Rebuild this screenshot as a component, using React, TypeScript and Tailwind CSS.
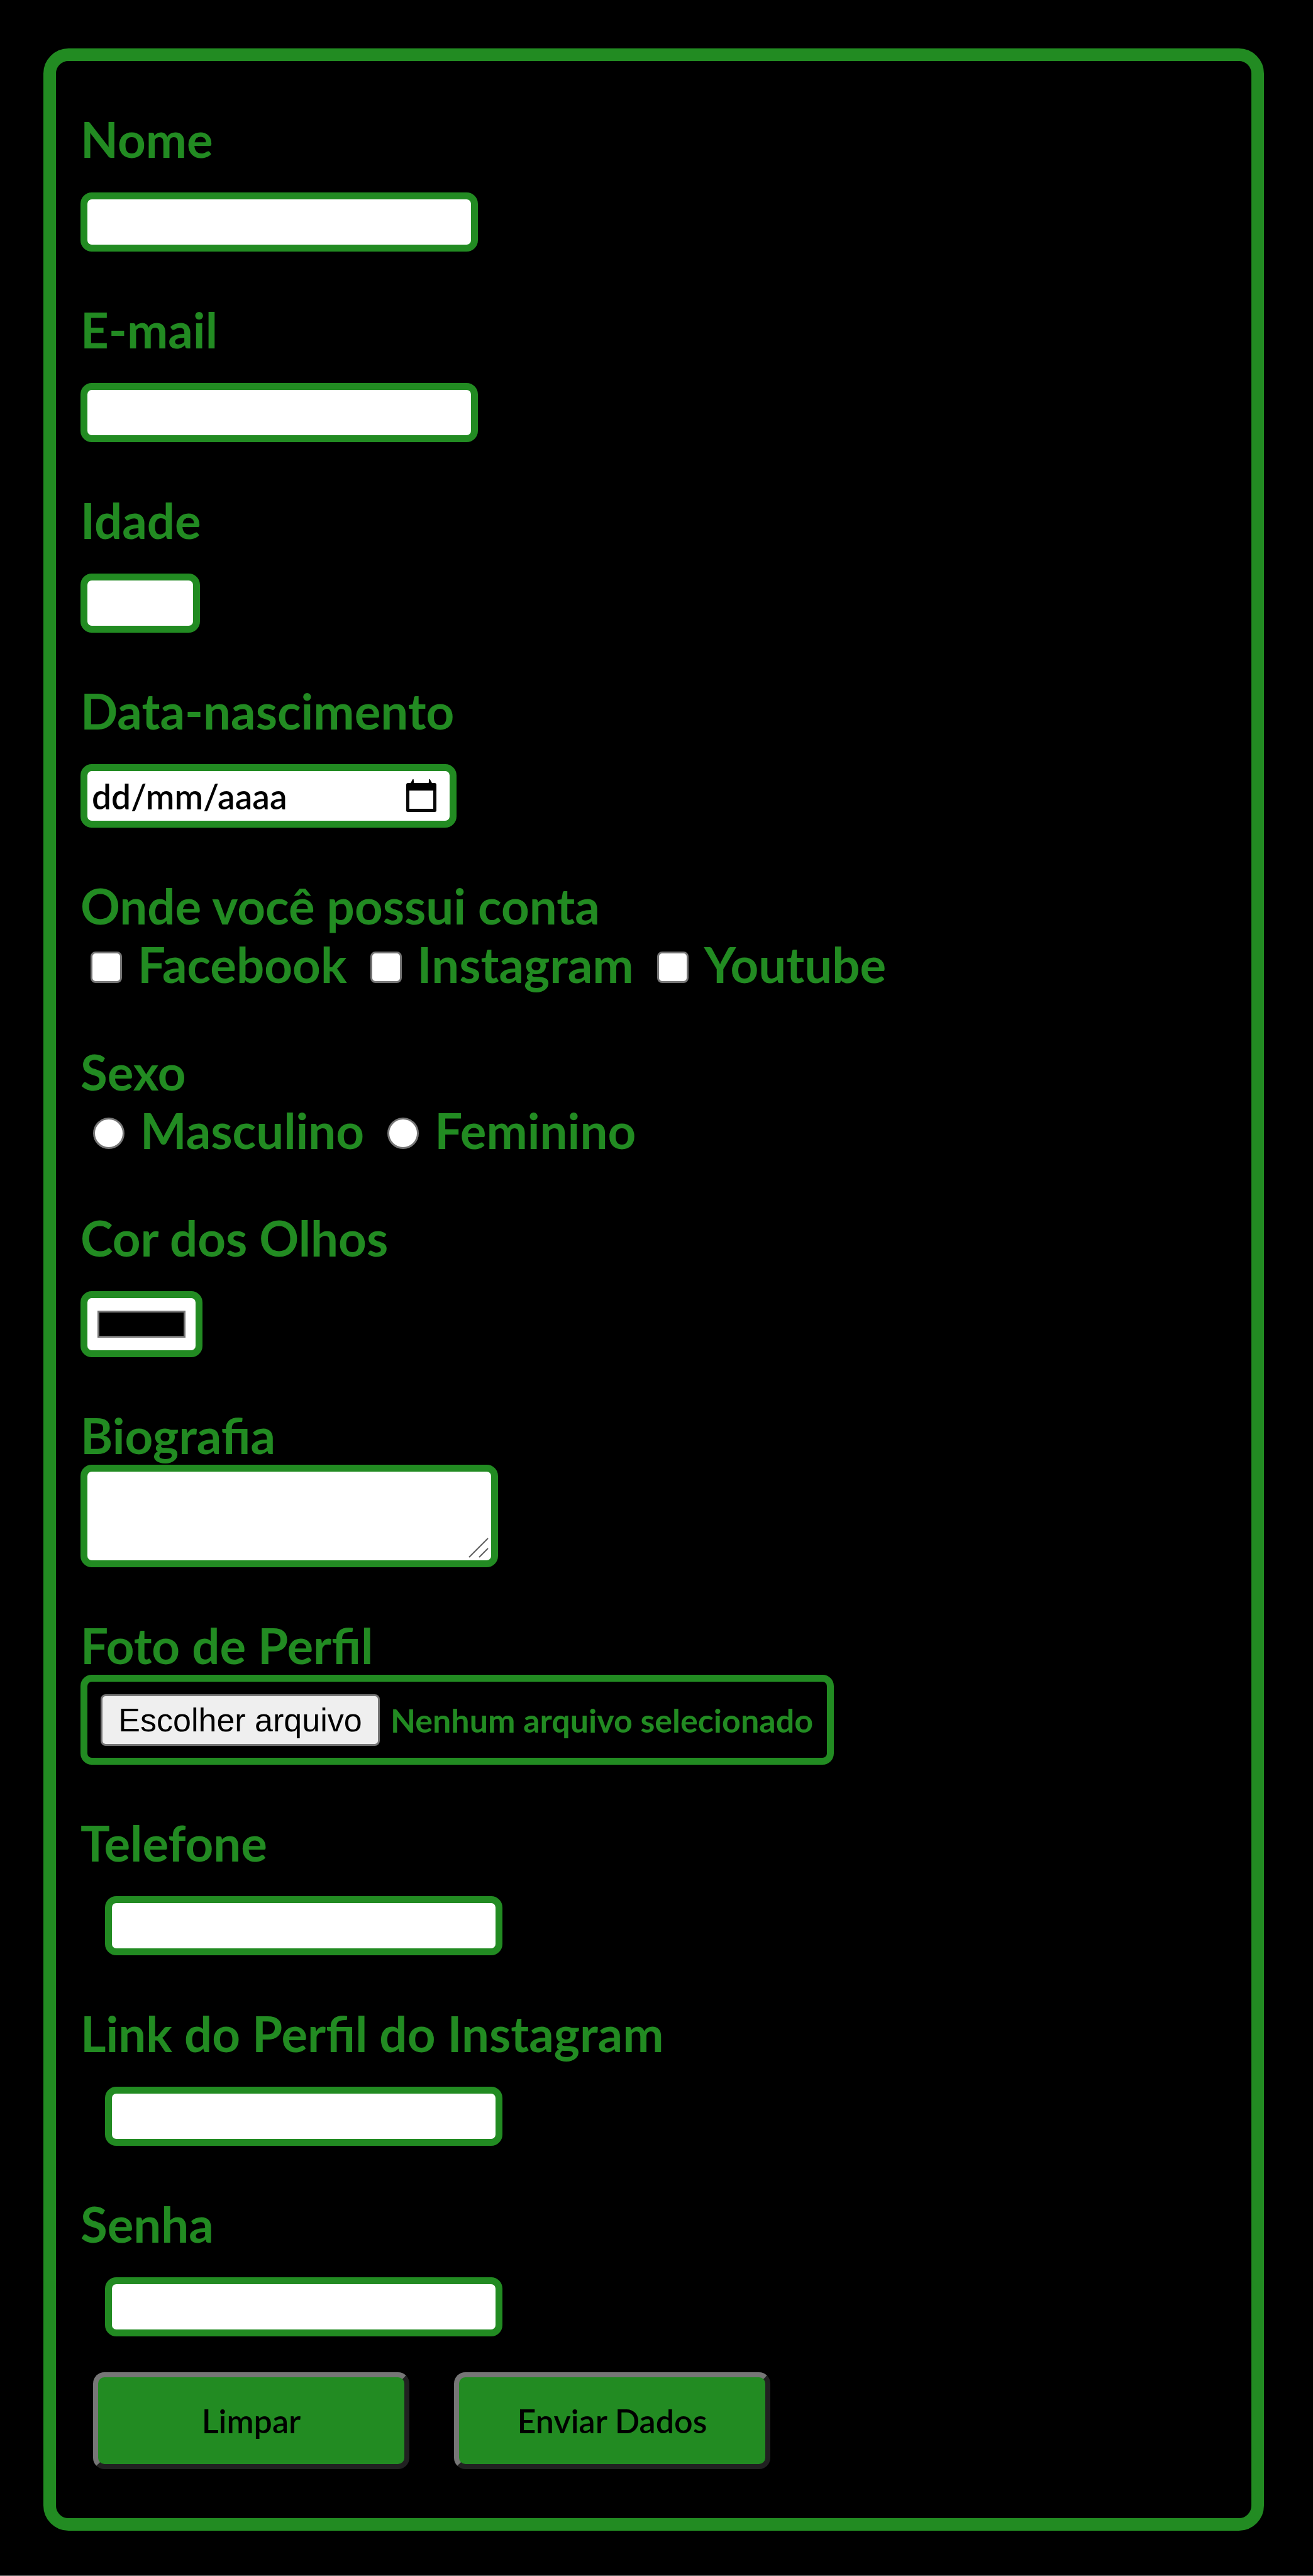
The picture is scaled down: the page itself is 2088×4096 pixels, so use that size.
import { useRef, useState } from "react";
import type { ReactNode } from "react";

const control =
  "block h-[94px] rounded-[18px] border-[11px] border-[#228b22] bg-white px-3 text-[52px] font-semibold text-black outline-none";

const actionButton =
  "h-[154px] w-[503px] rounded-[18px] border-[8px] border-t-[#767676] border-l-[#767676] border-r-[#212121] border-b-[#212121] bg-[#228b22] text-[52px] font-semibold text-black";

function Field({ id, label, tight = false, children }: { id: string; label: string; tight?: boolean; children: ReactNode }) {
  return (
    <div className={tight ? "flex flex-col items-start" : "flex flex-col items-start gap-[38px]"}>
      <label htmlFor={id} className="block">
        {label}
      </label>
      {children}
    </div>
  );
}

function Tick({ label }: { label: string }) {
  return (
    <label className="flex items-center gap-[25px]">
      <input
        type="checkbox"
        className="mt-2 size-[50px] appearance-none rounded-[8px] border-[3px] border-[#767676] bg-white checked:bg-[#228b22]"
      />
      {label}
    </label>
  );
}

function Choice({ label }: { label: string }) {
  return (
    <label className="flex items-center gap-[25px]">
      <input
        type="radio"
        name="sexo"
        className="mt-2 size-[50px] appearance-none rounded-full border-[3px] border-[#767676] bg-white checked:bg-[#228b22]"
      />
      {label}
    </label>
  );
}

export default function App() {
  const [fileName, setFileName] = useState("Nenhum arquivo selecionado");
  const dateRef = useRef<HTMLInputElement>(null);

  return (
    <main className="flow-root min-h-screen border-b border-[#767676] bg-black pb-[71px] font-['Lato',sans-serif] text-[78px] leading-[93px] font-bold text-[#228b22]">
      <form className="mt-[77px] mr-[78px] ml-[69px] flex flex-col gap-[78px] rounded-[40px] border-[20px] border-[#228b22] px-[39px] py-[78px]">
        <Field id="nome" label="Nome">
          <input id="nome" type="text" className={`${control} w-[632px]`} />
        </Field>
        <Field id="email" label="E-mail">
          <input id="email" type="email" className={`${control} w-[632px]`} />
        </Field>
        <Field id="idade" label="Idade">
          <input id="idade" type="text" inputMode="numeric" className={`${control} w-[190px]`} />
        </Field>
        <Field id="data" label="Data-nascimento">
          <div className="flex h-[101px] w-[598px] items-center rounded-[18px] border-[11px] border-[#228b22] bg-white pr-[19px] pl-[7px]">
            <input
              id="data"
              ref={dateRef}
              type="text"
              placeholder="dd/mm/aaaa"
              className="min-w-0 flex-1 bg-transparent text-[55px] leading-[64px] font-semibold text-black outline-none placeholder:text-black"
            />
            <button type="button" aria-label="Abrir calendário" onClick={() => dateRef.current?.focus()}>
              <svg viewBox="0 0 52 56" className="block h-14 w-[52px]" fill="none">
                <path d="M4.500 12h43v38.500h-43z" stroke="#080808" strokeWidth="5" strokeLinejoin="round" />
                <path d="M2 10a3 3 0 0 1 3-3h42a3 3 0 0 1 3 3v9H2z" fill="#000" />
                <path d="M9 8l4-7 1 7zM38 8l1-7 4 7z" fill="#000" stroke="#000" strokeWidth="1" />
              </svg>
            </button>
          </div>
        </Field>
        <fieldset>
          <legend>Onde você possui conta</legend>
          <div className="flex gap-[37px] pl-4">
            <Tick label="Facebook" />
            <Tick label="Instagram" />
            <Tick label="Youtube" />
          </div>
        </fieldset>
        <fieldset>
          <legend>Sexo</legend>
          <div className="flex gap-[37px] pl-5">
            <Choice label="Masculino" />
            <Choice label="Feminino" />
          </div>
        </fieldset>
        <Field id="cor" label="Cor dos Olhos">
          <input
            id="cor"
            type="color"
            defaultValue="#000000"
            className="block h-[105px] w-[194px] appearance-none rounded-[18px] border-[11px] border-[#228b22] bg-white px-4 py-5 [&::-webkit-color-swatch]:rounded-none [&::-webkit-color-swatch]:border-[3px] [&::-webkit-color-swatch]:border-[#767676] [&::-webkit-color-swatch-wrapper]:p-0"
          />
        </Field>
        <Field id="bio" label="Biografia" tight>
          <div className="relative">
            <textarea
              id="bio"
              className="block h-[163px] w-[664px] resize-none rounded-[18px] border-[11px] border-[#228b22] bg-white px-3 text-[52px] leading-[64px] font-semibold text-black outline-none"
            />
            <svg viewBox="0 0 32 32" className="pointer-events-none absolute right-[15px] bottom-[15px] size-8" fill="none" stroke="#606060" strokeWidth="2">
              <path d="M1 31L31 1M17 31L31 17" />
            </svg>
          </div>
        </Field>
        <Field id="foto" label="Foto de Perfil" tight>
          <div className="flex h-[143px] w-[1198px] items-center rounded-[18px] border-[11px] border-[#228b22] px-[21px] text-[52px] leading-[64px]">
            <input
              id="foto"
              type="file"
              className="sr-only"
              onChange={(e) => setFileName(e.target.files?.[0]?.name ?? "Nenhum arquivo selecionado")}
            />
            <label
              htmlFor="foto"
              className="flex h-[82px] w-[444px] items-center justify-center rounded-[8px] border-[3px] border-[#767676] bg-[#efefef] font-['Liberation_Sans',Arial,sans-serif] font-normal text-black"
            >
              Escolher arquivo
            </label>
            <span className="pl-[17px] whitespace-nowrap">{fileName}</span>
          </div>
        </Field>
        <Field id="telefone" label="Telefone">
          <input id="telefone" type="tel" className={`${control} ml-[39px] w-[632px]`} />
        </Field>
        <Field id="link" label="Link do Perfil do Instagram">
          <input id="link" type="url" className={`${control} ml-[39px] w-[632px]`} />
        </Field>
        <div className="flex flex-col gap-[57px]">
          <Field id="senha" label="Senha">
            <input id="senha" type="password" className={`${control} ml-[39px] w-[632px]`} />
          </Field>
          <div className="flex gap-[71px] pl-5">
            <button type="reset" className={actionButton}>
              Limpar
            </button>
            <button type="button" className={actionButton}>
              Enviar Dados
            </button>
          </div>
        </div>
      </form>
    </main>
  );
}
